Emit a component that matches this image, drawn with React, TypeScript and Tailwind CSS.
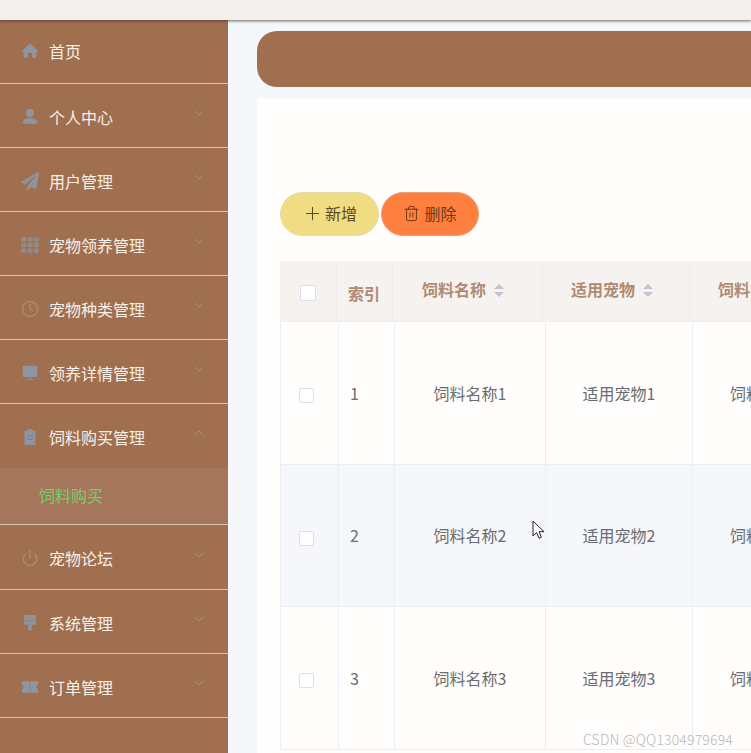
import React from "react";
import { FaPaperPlane, FaTh } from "react-icons/fa";
import { ChevronDown, ChevronUp, Clock, Plus, Power, Trash2 } from "lucide-react";

type IconProps = { className?: string };

const HomeIcon = ({ className }: IconProps) => (
  <svg className={className} viewBox="0 0 20 20" fill="currentColor">
    <path d="M10 1.5 18.5 9.5V11H17v6.5h-4.5V12h-5v5.5H3V11H1.5V9.500Z" />
  </svg>
);

const UserIcon = ({ className }: IconProps) => (
  <svg className={className} viewBox="0 0 20 20" fill="currentColor">
    <circle cx="10" cy="5.500" r="4.500" />
    <path d="M2 17.500c0-4 2.500-6 8-6s8 2 8 6z" />
  </svg>
);

const DesktopIcon = ({ className }: IconProps) => (
  <svg className={className} viewBox="0 0 20 20" fill="currentColor">
    <rect x="2" y="2" width="16" height="12.500" rx="1" />
    <path d="M8.500 14.500h3v2h-3zM5.500 17h9v1h-9z" opacity=".6" />
  </svg>
);

const ClipboardIcon = ({ className }: IconProps) => (
  <svg className={className} viewBox="0 0 20 20" fill="currentColor">
    <path d="M7.500 1h5v2H16v16H4V3h3.500z" />
    <path d="M6.500 8h7v1.200h-7zM6.500 12h7v1.200h-7z" fill="#a06f50" opacity=".7" />
  </svg>
);

const BrushIcon = ({ className }: IconProps) => (
  <svg className={className} viewBox="0 0 20 20" fill="currentColor">
    <rect x="3.500" y="1" width="13" height="11" rx="1" />
    <path d="M3.500 7h13v1h-13z" fill="#a06f50" opacity=".6" />
    <path d="M8 12h4v5.500l-2 1-2-1z" />
  </svg>
);

const TicketIcon = ({ className }: IconProps) => (
  <svg className={className} viewBox="0 0 20 20" fill="currentColor">
    <path d="M1 3.500h18v3.500l-2 3 2 3v3.500H1V13l2-3-2-3z" />
    <path d="M9.500 3.500h1.200v13H9.500z" fill="#a06f50" opacity=".5" />
  </svg>
);

const menu = [
  { label: "个人中心", icon: UserIcon, tone: "text-[#8c96a3]" },
  { label: "用户管理", icon: FaPaperPlane, tone: "text-[#8e9299]" },
  { label: "宠物领养管理", icon: FaTh, tone: "text-[#908a88]" },
  { label: "宠物种类管理", icon: Clock, tone: "text-[#ae8871]" },
  { label: "领养详情管理", icon: DesktopIcon, tone: "text-[#8c96a3]" },
];

const menuBottom = [
  { label: "系统管理", icon: BrushIcon, tone: "text-[#8c96a3]" },
  { label: "订单管理", icon: TicketIcon, tone: "text-[#8c96a3]" },
];

const MenuItem = ({
  label,
  icon: Icon,
  tone,
  open,
  chevronClass = "top-[21px]",
  className = "h-16 border-b border-[#d9bfae] pt-[3px]",
}: {
  label: string;
  icon: React.ComponentType<IconProps>;
  tone: string;
  open?: boolean;
  chevronClass?: string;
  className?: string;
}) => (
  <div className={`relative flex items-center pl-5 ${className}`}>
    <Icon className={`mr-[9px] h-5 w-5 p-px ${tone}`} />
    <span>{label}</span>
    {open ? (
      <ChevronUp className={`absolute right-[21px] h-4 w-4 text-[#b48c73] ${chevronClass}`} strokeWidth={1.5} />
    ) : (
      <ChevronDown className={`absolute right-[21px] h-4 w-4 text-[#b48c73] ${chevronClass}`} strokeWidth={1.5} />
    )}
  </div>
);

const Sort = () => (
  <span className="ml-[8px] inline-flex flex-col gap-[3px] pt-[3px]">
    <span className="h-0 w-0 border-x-[5px] border-b-[5px] border-x-transparent border-b-[#c0c4cc]" />
    <span className="h-0 w-0 border-x-[5px] border-t-[5px] border-x-transparent border-t-[#c0c4cc]" />
  </span>
);

const Row = ({ n, stripe }: { n: number; stripe?: boolean }) => (
  <div
    className={`grid h-[142.5px] grid-cols-[58px_56px_151px_147px_147px] border-b border-l border-[#ebeef5] text-[#6a6c71] ${
      stripe ? "bg-[#f5f7fb]" : ""
    }`}
  >
    <div className="flex items-center border-r border-[#ebeef5] pl-[18px] pt-[6px]">
      <span className="h-[15px] w-[15px] rounded-[2px] border border-[#dcdfe6] bg-white" />
    </div>
    <div className="flex items-center border-r border-[#ebeef5] pl-[11px]">{n}</div>
    <div className="flex items-center justify-center border-r border-[#ebeef5]">饲料名称{n}</div>
    <div className="flex items-center justify-center border-r border-[#ebeef5]">适用宠物{n}</div>
    <div className="flex items-center justify-center whitespace-nowrap">饲料名称{n}</div>
  </div>
);

export default function App() {
  return (
    <div className="relative flex h-[753px] w-[751px] flex-col overflow-hidden bg-[#f5f8fb] font-['Noto_Sans_CJK_SC',sans-serif] text-base">
      <div className="relative z-10 h-5 shrink-0 bg-[#f4f0ed] shadow-[0_1px_3px_rgba(60,50,40,0.75)]" />
      <div className="flex min-h-0 flex-1">
        <aside className="w-[228px] shrink-0 bg-[#a06f50] text-[#f7f0ea]">
          <div className="flex h-16 items-center border-b border-[#d9bfae] pb-[2px] pl-5">
            <HomeIcon className="mr-[9px] h-5 w-5 p-px text-[#8c96a3]" />
            <span>首页</span>
          </div>
          {menu.map((m) => (
            <MenuItem key={m.label} label={m.label} icon={m.icon} tone={m.tone} />
          ))}
          <MenuItem
            label="饲料购买管理"
            icon={ClipboardIcon}
            tone="text-[#8c96a3]"
            open
            className="h-16 pt-[2px]"
          />
          <div className="flex h-[57px] items-center border-b border-[#d9bfae] bg-[#a6765c] pb-[3px] pl-[39px] text-[#72cf6c]">
            饲料购买
          </div>
          <MenuItem
            label="宠物论坛"
            icon={Power}
            tone="text-[#ae8871]"
            className="h-[65px] border-b border-[#d9bfae] pt-[2px]"
            chevronClass="top-[22px]"
          />
          {menuBottom.map((m) => (
            <MenuItem key={m.label} label={m.label} icon={m.icon} tone={m.tone} />
          ))}
        </aside>
        <main className="min-w-0 flex-1 pl-[29px] pt-[11px]">
          <div className="h-14 w-[600px] rounded-l-[20px] bg-[#a06f50]" />
          <div className="mt-[11px] h-[700px] w-[600px] bg-[#fffefd] pl-[23px] pt-[94px]">
            <div className="flex gap-[2px]">
              <button className="flex h-[44px] w-[99px] items-center justify-center rounded-full border border-[#e6dcae] bg-[#f0dc82] pb-[2px] text-[#5c4a1e]">
                <Plus className="mr-[2px] h-[21px] w-[21px]" strokeWidth={1.2} />
                新增
              </button>
              <button className="flex h-[44px] w-[98px] items-center justify-center rounded-full border border-[#e8a077] bg-[#ff7f3f] pb-[2px] text-[#6b3a1a]">
                <Trash2 className="mr-[4px] h-[17px] w-[17px]" strokeWidth={1.4} />
                删除
              </button>
            </div>
            <div className="mt-[25px] w-[801px]">
              <div className="grid h-[61px] grid-cols-[57px_56px_150px_147px_147px] border-b border-[#ebeef5] bg-[#f6f2f0] font-bold text-[#b08a70]">
                <div className="flex items-center border-r border-[#ede9e6] pl-5 pt-[3px]">
                  <span className="h-4 w-4 rounded-[2px] border border-[#dcdfe6] bg-white" />
                </div>
                <div className="flex items-center border-r border-[#ede9e6] pl-[11px] pt-[3px]">索引</div>
                <div className="flex items-center justify-center border-r border-[#ede9e6] pb-[4px] pr-[9px]">
                  饲料名称
                  <Sort />
                </div>
                <div className="flex items-center justify-center border-r border-[#ede9e6] pb-[4px] pr-[8px]">
                  适用宠物
                  <Sort />
                </div>
                <div className="flex items-center justify-center whitespace-nowrap pb-[4px] pr-[9px]">
                  饲料名称
                  <Sort />
                </div>
              </div>
              <Row n={1} />
              <Row n={2} stripe />
              <Row n={3} />
            </div>
          </div>
        </main>
      </div>
      <svg
        className="absolute left-[532px] top-[520px]"
        width="13"
        height="20"
        viewBox="0 0 13 20"
      >
        <path
          d="M1 1v15l3.600-3.400 2.400 5.600 2.400-1-2.400-5.500h5z"
          fill="#fff"
          stroke="#222"
          strokeWidth="1"
        />
      </svg>
      <div className="absolute left-[583px] top-[729px] whitespace-nowrap text-sm font-light tracking-[0.17px] text-[#b8b8b8]">
        CSDN @QQ1304979694
      </div>
    </div>
  );
}
